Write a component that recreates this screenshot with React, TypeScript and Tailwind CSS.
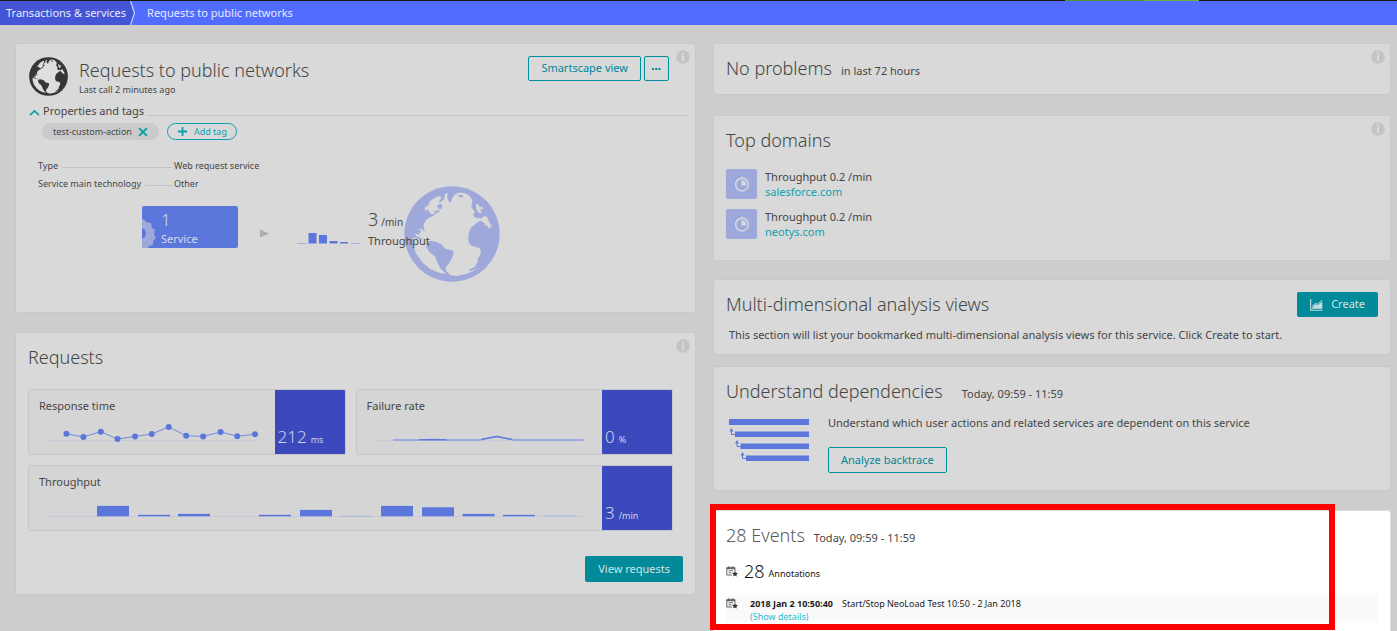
import type { ReactNode } from "react";

function Globe({ className, land, sea }: { className: string; land: string; sea: string }) {
  return (
    <svg viewBox="14 13 286 286" className={className} aria-hidden="true">
      <circle cx="157" cy="156" r="142" fill={land} />
      <g fill={sea}>
        <path d="M75 78L86 70L92 58L106 48L122 41L125 50L118 60L122 66L112 72L118 80L112 88L104 86L106 94L98 98L92 94L86 84L78 86Z" />
        <path d="M136 36L145 34L142 46L148 60L154 62L158 48L165 38L178 32L192 34L206 40L216 52L218 64L214 74L220 84L226 90L220 98L224 106L236 109L242 108L244 116L232 122L222 130L213 138L208 150L205 166L207 182L214 190L228 195L240 198L243 208L240 220L234 230L232 242L224 254L208 262L210 268L226 260L236 256L218 268L196 276L172 281L152 279L140 266L138 256L146 246L153 236L158 226L162 214L160 206L148 202L136 200L124 186L108 178L92 177L80 181L76 172L50 162L46 154L58 158L66 146L56 142L66 140L76 150L74 142L72 130L78 116L90 107L100 103L110 94L120 90L116 82L126 80L128 68L118 66L134 52Z" />
        <path d="M40 166L56 170L74 170L82 182L80 194L90 210L106 222L114 242L122 258L140 276L116 271L92 260L68 240L50 214L41 188Z" />
        <path d="M228 68L234 66L240 76L248 74L249 82L240 84L246 92L238 94L230 84Z" />
        <path d="M244 108L256 102L262 106L268 120L278 138L270 134L266 142L262 128L258 134L252 122L244 118Z" />
      </g>
      <path d="M174 42L184 38L192 44L184 48Z" fill={land} />
      <path d="M218 60L226 70L224 80L232 86L226 90L220 80L216 72Z" fill={land} />
    </svg>
  );
}

function Info() {
  return (
    <svg viewBox="0 0 14 14" className="absolute top-[6px] right-[5px] size-[14px]" role="img" aria-label="Info">
      <circle cx="7" cy="7" r="6.8" fill="#c4c4c4" />
      <rect x="6" y="2.4" width="2" height="2" fill="#dadada" />
      <path d="M5.2 5.4H8V11.6H6V6.4H5.2Z" fill="#dadada" />
    </svg>
  );
}

function Card({ className = "", info = false, children }: { className?: string; info?: boolean; children: ReactNode }) {
  return (
    <section className={`relative rounded-[3px] border border-[#c8c8c8] bg-[#d9d9d9] px-3 ${className}`}>
      {info && <Info />}
      {children}
    </section>
  );
}

function Heading({ children }: { children: ReactNode }) {
  return <h2 className="pb-[2px] text-[18px] leading-6 font-light text-[#454646]">{children}</h2>;
}

function Metric({ title, value, unit, children }: { title: string; value: string; unit: string; children: ReactNode }) {
  return (
    <div className="flex h-[66px] overflow-hidden rounded-[2px] border border-[#c6c6c6] bg-[#d5d5d5]">
      <div className="flex min-w-0 flex-1 flex-col justify-between pt-2">
        <h3 className="pl-[10px] text-[11px] leading-4">{title}</h3>
        {children}
      </div>
      <div className="flex w-[70px] items-baseline gap-1 bg-[#3c49bd] pt-[35px] pl-[3px] text-[#d0d3e8]">
        <span className="text-[17px] leading-6 font-light">{value}</span>
        <span className="text-[9px] leading-4">{unit}</span>
      </div>
    </div>
  );
}

const responsePoints = [
  [37.5, 14.7], [54.5, 18], [72, 12.7], [88.7, 20], [106.3, 17.5], [123, 15],
  [140, 8], [157.5, 16.7], [174.5, 17.5], [192, 13], [208.7, 17.3], [226.5, 15.3],
];

const throughputBars = [
  [68, 10.4], [109, 1.5], [149, 2.4], [230, 1.5], [271, 6.4], [352, 10.4], [393, 9], [433.5, 2.4], [474, 1.5],
];

function Domain({ name }: { name: string }) {
  return (
    <li className="flex items-center gap-2">
      <span className="flex h-[30px] w-[31px] items-center justify-center rounded-[2px] bg-[#9fa8da]">
        <svg viewBox="0 0 16 16" className="size-4" fill="none" aria-hidden="true">
          <circle cx="8" cy="8.6" r="6.3" stroke="#d9d9e0" strokeWidth="1.5" />
          <path d="M8 .4V2.4" stroke="#d9d9e0" strokeWidth="1.6" />
          <path d="M7.4 4V9.4H12.2A4.8 4.8 0 0 0 7.4 4Z" fill="#d9d9e0" />
        </svg>
      </span>
      <span className="flex flex-col pt-px text-[11px] leading-[15px]">
        <span>Throughput 0.2 /min</span>
        <a href="#domain" className="text-[#0c9fae]">{name}</a>
      </span>
    </li>
  );
}

function Annotation({ className = "" }: { className?: string }) {
  return (
    <svg viewBox="0 0 12 11" className={`h-[11px] w-3 shrink-0 ${className}`} fill="none" aria-hidden="true">
      <path d="M.8 1.6H9V5M.8 1.6V9H6" stroke="#666" strokeWidth="1" />
      <path d="M.8 2.6H9" stroke="#666" strokeWidth="1.4" />
      <path d="M2.8 0V2M6.8 0V2" stroke="#666" strokeWidth="1" />
      <path d="M2.5 4.8H7.2M2.5 6.8H5.6" stroke="#666" strokeWidth=".9" />
      <path d="M9 4.8L9.8 6.8L12 7L10.4 8.4L10.9 10.6L9 9.4L7.1 10.6L7.6 8.4L6 7L8.2 6.8Z" fill="#333" />
    </svg>
  );
}

const outline = "rounded-[2px] border border-[#008f9e] text-[11px] text-[#008796]";

export default function App() {
  return (
    <div className="flex min-h-screen flex-col bg-[#cdcdcd] font-['Noto_Sans',sans-serif] text-[#454646]">
      <div className="flex h-px bg-[#191919]">
        <div className="ml-[76.2%] h-px w-20 bg-[#4d9a35]" />
        <div className="h-px w-[54px] bg-[#6bb53f]" />
      </div>
      <nav aria-label="Breadcrumb" className="flex h-6 items-stretch bg-[#526cff] text-[11px] leading-6 text-[#e8ebff]">
        <a href="#services" className="bg-[#4455d6] pr-1 pl-[6px]">Transactions &amp; services</a>
        <svg viewBox="0 0 6 24" className="h-6 w-[6px]" aria-hidden="true">
          <path d="M0 0L4.5 12L0 24Z" fill="#4455d6" />
          <path d="M.5 0L4.5 12L.5 24" fill="none" stroke="#d5dbff" strokeWidth="1.1" />
        </svg>
        <a href="#requests" className="pl-[11px]">Requests to public networks</a>
      </nav>

      <main className="grid flex-1 grid-cols-[681fr_678fr] gap-[17px] pt-[18px] pr-[6px] pl-[15px]">
        <div className="flex flex-col gap-[19px]">
          <Card info className="h-[270px] pt-3">
            <header className="flex items-start">
              <Globe className="mt-px ml-px size-[39px]" land="#353637" sea="#dedede" />
              <div className="ml-[11px] flex-1">
                <h1 className="pt-px text-[18px] leading-[26px] font-light">Requests to public networks</h1>
                <p className="pt-px text-[9px] leading-3">Last call 2 minutes ago</p>
              </div>
              <div className="mr-[14px] flex gap-[3px]">
                <button className={`${outline} h-[25px] px-3`}>Smartscape view</button>
                <button className={`${outline} flex h-[25px] w-[25px] items-center justify-center`} aria-label="More">
                  <svg viewBox="0 0 9 2" className="h-[2px] w-[9px]" fill="#008796"><path d="M0 0h2v2H0zM3.2 0h2v2h-2zM6.4 0h2v2h-2z" /></svg>
                </button>
              </div>
            </header>

            <div className="mt-[7px] mr-[-4px] flex items-center">
              <svg viewBox="0 0 11 8" className="mt-[3px] ml-px h-2 w-[11px]" fill="none" aria-hidden="true">
                <path d="M1 6.2L5.5 2L10 6.2" stroke="#0c9fae" strokeWidth="1.7" />
              </svg>
              <h2 className="ml-[3px] text-[11px] leading-4">Properties and tags</h2>
              <div className="mt-2 ml-1 h-px flex-1 bg-[#c2c2c2]" />
            </div>
            <div className="mt-1 ml-[14px] flex gap-2 text-[9px] leading-[17px]">
              <span className="flex h-[17px] items-center gap-[6px] rounded-full bg-[#cbcbcb] px-[11px]">
                test-custom-action
                <button aria-label="Remove tag">
                  <svg viewBox="0 0 9 9" className="size-[10px]"><path d="M1 1L8 8M8 1L1 8" stroke="#0c9fae" strokeWidth="1.8" /></svg>
                </button>
              </span>
              <button className="flex h-[17px] items-center gap-[6px] rounded-full border border-[#0c9fae] px-[9px] text-[#0c9fae]">
                <svg viewBox="0 0 11 11" className="size-[11px]"><path d="M5.5 1V10M1 5.5H10" stroke="#0c9fae" strokeWidth="1.8" /></svg>
                Add tag
              </button>
            </div>

            <dl className="mt-[19px] ml-[10px] flex w-[240px] flex-col gap-1 text-[9px] leading-[14px]">
              <div className="flex">
                <dt className="flex w-[136px] items-center gap-1 pr-[2px] after:mt-[3px] after:h-px after:flex-1 after:bg-[#c2c2c2]">Type</dt>
                <dd className="whitespace-nowrap">Web request service</dd>
              </div>
              <div className="flex">
                <dt className="flex w-[136px] items-center gap-1 pr-[2px] whitespace-nowrap after:mt-[3px] after:h-px after:flex-1 after:bg-[#c2c2c2]">Service main technology</dt>
                <dd>Other</dd>
              </div>
            </dl>

            <div className="mt-[-5px] ml-[114px] flex items-start">
              <div className="relative mt-[20px] flex h-[42px] w-24 flex-col overflow-hidden rounded-[2px] bg-[#5c77dc] pt-[3px] pl-[19px] text-[#d4d9ee]">
                <svg viewBox="0 0 14 29" className="absolute bottom-0 left-0 h-[29px] w-[14px]" aria-hidden="true">
                  <path d="M0 0L3 1L4 3L9 4L10 9L13 11L12 15L14 19L11 22L11 26L7 27L6 29H0V20L3 18L4 14L3 11L0 9Z" fill="#9fa8da" />
                </svg>
                <span className="text-[17px] leading-[22px] font-light">1</span>
                <span className="text-[11px] leading-4">Service</span>
              </div>
              <svg viewBox="0 0 9 9" className="mt-[43px] ml-[22px] size-[9px]" aria-hidden="true"><path d="M0 .5L9 4.5L0 8.5Z" fill="#adadad" /></svg>
              <svg viewBox="0 0 64 14" className="mt-[45px] ml-[28px] h-[14px] w-16" aria-hidden="true">
                <path d="M0 12.5H10M54 12.5H63" stroke="#a9b2dc" />
                <path d="M11.5 2H19.5V12.5H11.5ZM22 4H30V12.5H22ZM32.5 10H40.5V12.5H32.5ZM43 11H51V12.5H43Z" fill="#5c77dc" />
              </svg>
              <div className="z-10 mt-[22px] ml-[7px] w-9 whitespace-nowrap">
                <div className="flex items-baseline gap-[3px] leading-[22px]"><span className="text-[18px] font-light">3</span><span className="text-[10px]">/min</span></div>
                <div className="text-[11px] leading-4">Throughput</div>
              </div>
              <Globe className="size-[96px]" land="#9fa8da" sea="#d9d9d9" />
            </div>
          </Card>

          <Card info className="h-[263px] pt-3">
            <Heading>Requests</Heading>
            <div className="mt-[18px] mr-[10px] grid grid-cols-2 gap-[10px]">
              <Metric title="Response time" value="212" unit="ms">
                <svg viewBox="0 0 246 35" className="w-full" fill="none" aria-hidden="true">
                  <path d="M18 21.5H229" stroke="#c8cadb" />
                  <polyline points={responsePoints.map((p) => p.join(",")).join(" ")} stroke="#7388dc" />
                  {responsePoints.map(([x, y]) => <circle key={x} cx={x} cy={y} r="3" fill="#5c77dc" />)}
                </svg>
              </Metric>
              <Metric title="Failure rate" value="0" unit="%">
                <svg viewBox="0 0 246 35" className="w-full" fill="none" aria-hidden="true">
                  <path d="M18 21.5H228" stroke="#c8cadb" />
                  <path d="M36 21H123L140 17.5L157 21H227" stroke="#8b9cdd" strokeWidth="1.5" />
                  <path d="M62 20.8L78 20.4L90 20.8M125 20.4L140 17.5L155 20.4" stroke="#5c77dc" strokeWidth="1.2" />
                </svg>
              </Metric>
              <div className="col-span-2">
                <Metric title="Throughput" value="3" unit="/min">
                  <svg viewBox="0 0 573 36" className="w-full" aria-hidden="true">
                    <path d="M18 22.5H556" stroke="#c8cadb" />
                    <path d="M311 22.3H343M514.5 21.8H546.5" stroke="#a9b4dc" />
                    {throughputBars.map(([x, h]) => <rect key={x} x={x} y={22.3 - h} width="32" height={h} fill="#5c77dc" />)}
                  </svg>
                </Metric>
              </div>
            </div>
            <div className="mt-[25px] flex justify-end">
              <button className="h-[26px] rounded-[2px] bg-[#008a9a] px-[13px] text-[11px] text-[#d4e3e5]">View requests</button>
            </div>
          </Card>
        </div>

        <div className="flex flex-col">
          <Card info className="flex h-[52px] items-center">
            <Heading>No problems</Heading>
            <span className="ml-[9px] pt-[5px] text-[11px]">in last 72 hours</span>
          </Card>

          <Card info className="mt-5 h-[146px] pt-3">
            <Heading>Top domains</Heading>
            <ul className="mt-[14px] flex flex-col gap-[9px]">
              <Domain name="salesforce.com" />
              <Domain name="neotys.com" />
            </ul>
          </Card>

          <Card className="mt-[18px] h-[76px] pt-3">
            <div className="flex justify-between">
              <Heading>Multi-dimensional analysis views</Heading>
              <button className="flex h-[25px] items-center gap-2 rounded-[2px] bg-[#008a9a] px-[13px] text-[11px] text-[#d4e3e5]">
                <svg viewBox="0 0 13 12" className="h-3 w-[13px]" aria-hidden="true">
                  <path d="M.7 0V11.3H12.5" fill="none" stroke="#c5dde0" strokeWidth="1.1" />
                  <path d="M2 9.8V8.8L5.5 5.2L7.5 6.2L12.3 2.6V9.8Z" fill="#c5dde0" />
                  <path d="M2 7.2L5.5 4.4L7.5 5.4L12.3 1" fill="none" stroke="#c5dde0" strokeWidth="1" />
                </svg>
                Create
              </button>
            </div>
            <p className="mt-[9px] ml-[3px] text-[11px] leading-4">This section will list your bookmarked multi-dimensional analysis views for this service. Click Create to start.</p>
          </Card>

          <Card className="mt-[11px] h-[125px] pt-3">
            <div className="flex items-center">
              <Heading>Understand dependencies</Heading>
              <span className="ml-[19px] pt-[5px] text-[11px]">Today, 09:59 - 11:59</span>
            </div>
            <div className="mt-[10px] ml-[3px] flex items-start gap-[19px]">
              <svg viewBox="0 0 80 44" className="mt-1 h-11 w-20" aria-hidden="true">
                <path d="M0 0H80V6H0ZM6 12.5H80V18H6ZM11.5 24.5H80V30H11.5ZM17 36.5H80V42H17Z" fill="#5c77dc" />
                <path d="M2.5 12V15.5H6M8 24V27.5H12M13.5 36V39.5H17" fill="none" stroke="#5c77dc" />
                <path d="M2.5 9L4.5 12.5H.5ZM8 21L10 24.5H6ZM13.5 33L15.5 36.5H11.5Z" fill="#5c77dc" />
              </svg>
              <div>
                <p className="text-[11px] leading-4">Understand which user actions and related services are dependent on this service</p>
                <button className={`${outline} mt-4 h-[26px] px-3`}>Analyze backtrace</button>
              </div>
            </div>
          </Card>

          <section className="relative mt-[19px] flex-1 rounded-t-[3px] border border-b-0 border-[#dcdcdc] bg-white px-3 pt-3">
            <div className="flex items-center">
              <h2 className="pb-[2px] text-[18px] leading-6 font-light text-[#5a5a5a]">28 Events</h2>
              <span className="ml-[9px] pt-[5px] text-[11px]">Today, 09:59 - 11:59</span>
            </div>
            <div className="mt-[9px] flex items-center text-[#151515]">
              <Annotation />
              <span className="ml-[6px] text-[18px] leading-[26px] font-light">28</span>
              <span className="ml-1 pt-[5px] text-[9px]">Annotations</span>
            </div>
            <div className="mt-[11px] flex bg-[#fafafa] pt-[2px] text-[9px] leading-[13px] text-[#1c1c1c]">
              <Annotation className="mt-px" />
              <div className="ml-3">
                <p><strong className="font-bold">2018 Jan 2 10:50:40</strong><span className="ml-[9px]">Start/Stop NeoLoad Test 10:50 - 2 Jan 2018</span></p>
                <a href="#details" className="block text-[#26bccf]">(Show details)</a>
              </div>
            </div>
            <div className="pointer-events-none absolute -top-[7px] right-[55px] -left-1 h-[126px] border-6 border-[#ff0000]" />
          </section>
        </div>
      </main>
    </div>
  );
}
